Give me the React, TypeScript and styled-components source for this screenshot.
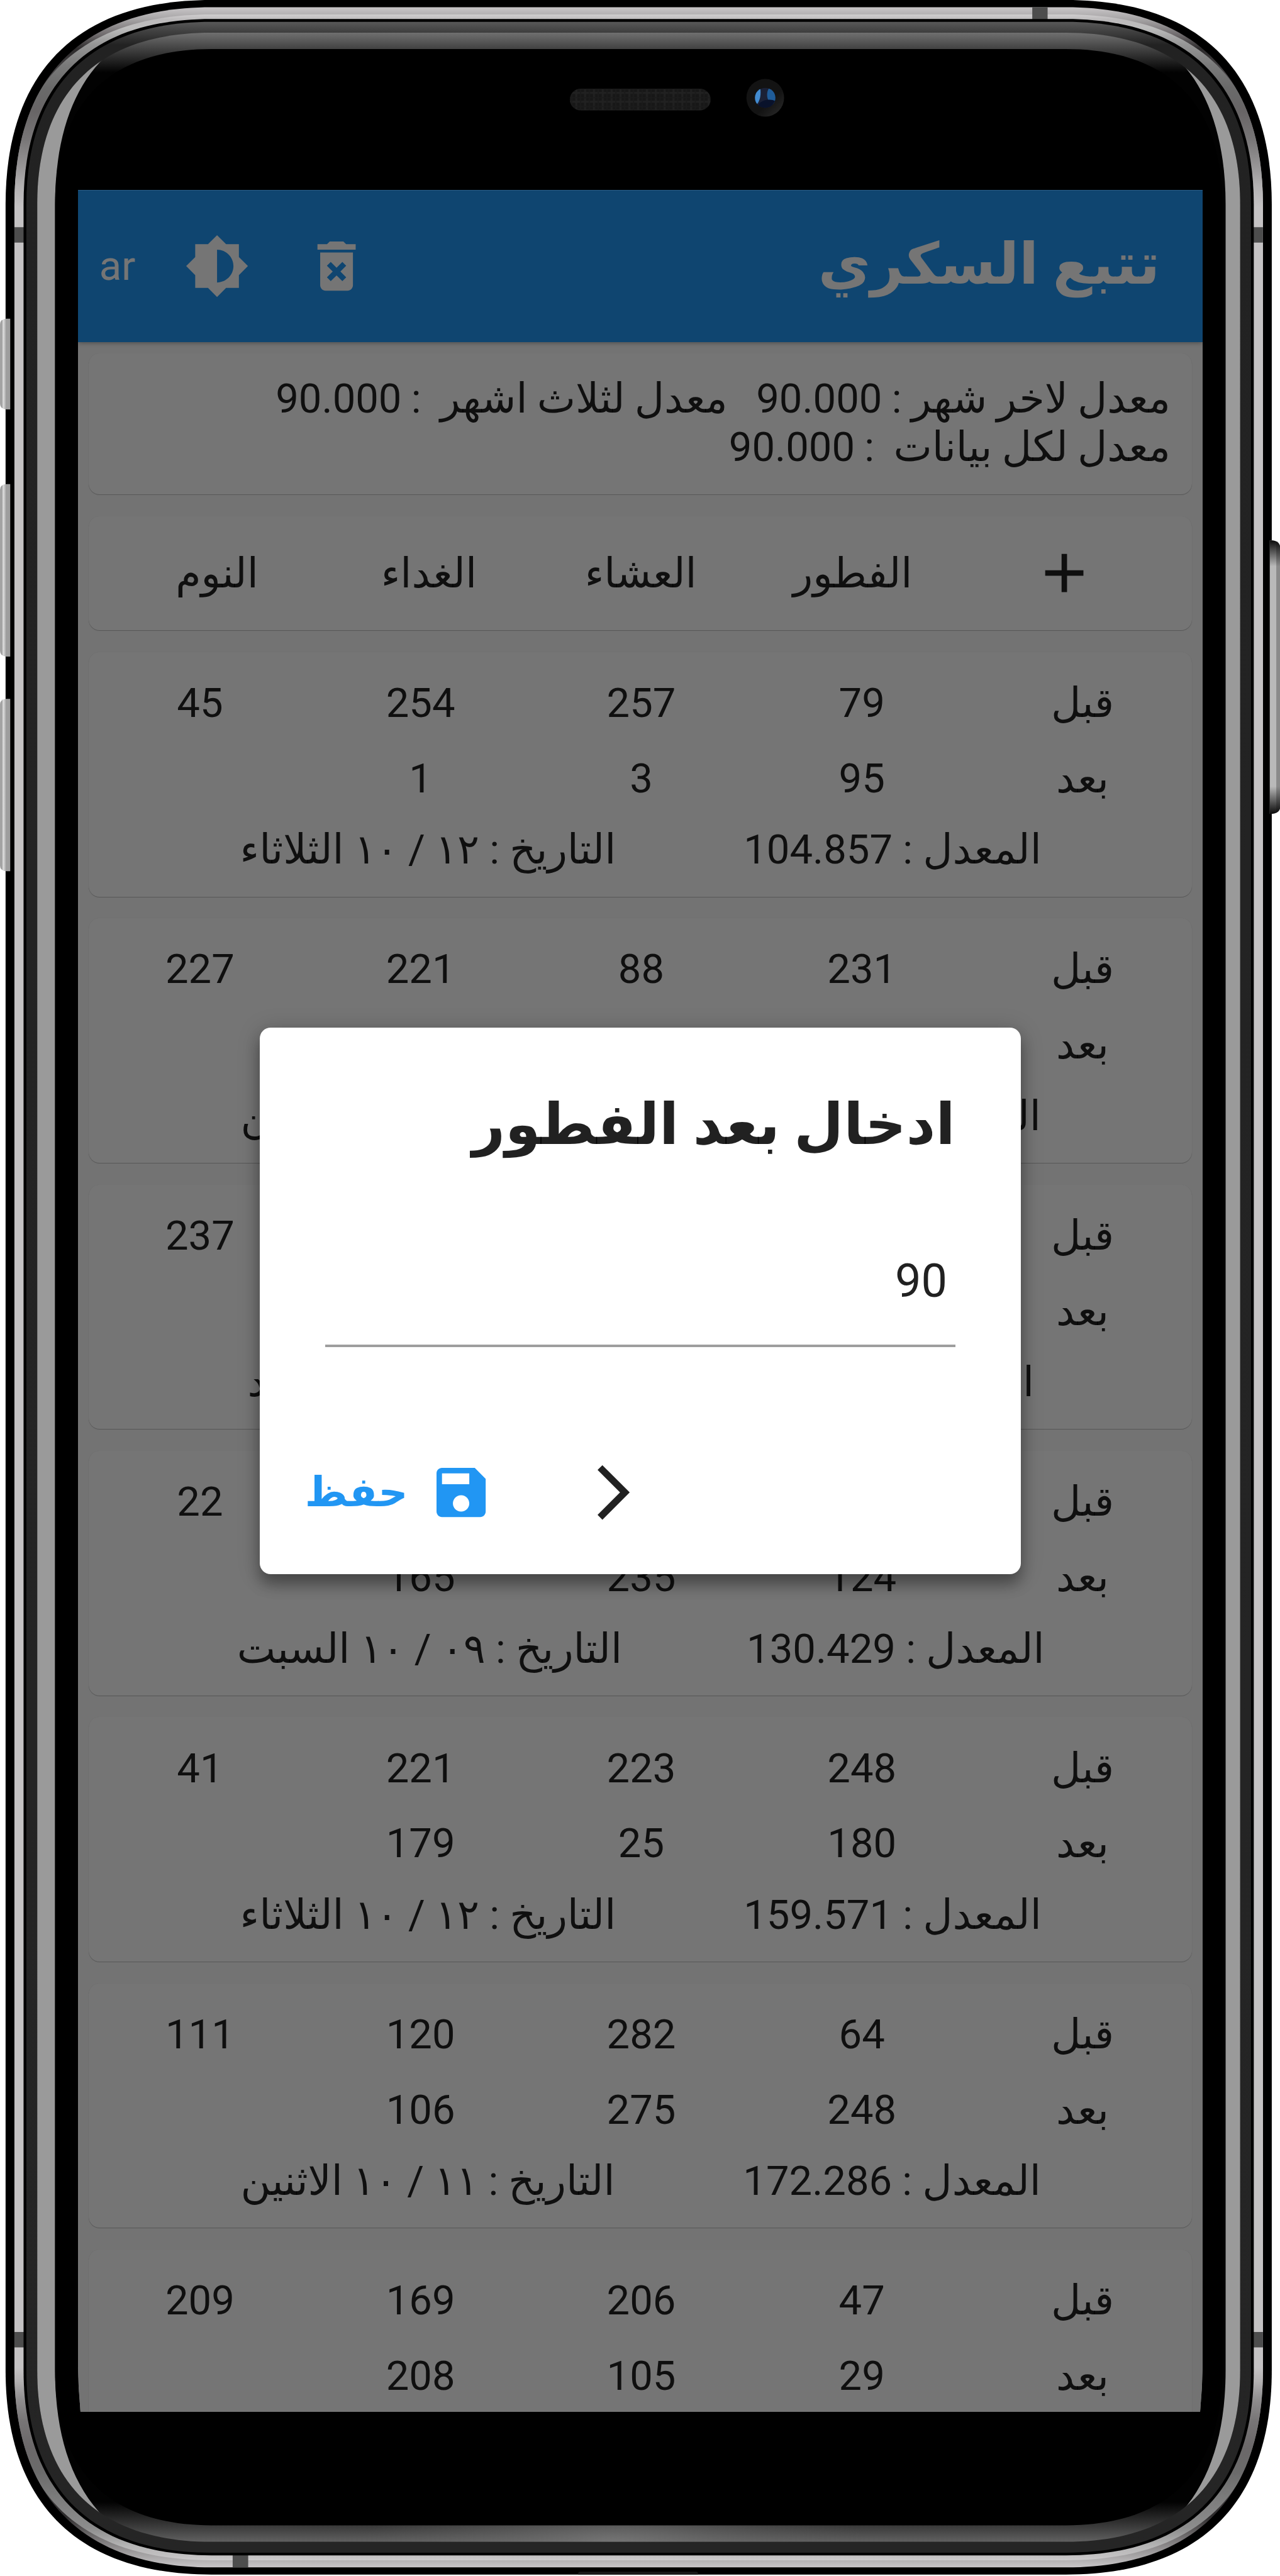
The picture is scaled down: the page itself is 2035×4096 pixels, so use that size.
import React from "react";
import styled, { createGlobalStyle } from "styled-components";

/* Design units are converted to page pixels with one shared factor. */
const K = 0.7389;
const u = (n: number) => `${+(n * K).toFixed(2)}px`;

const INK = "rgba(0, 0, 0, 0.87)";
const BLUE = "#2196f3";

const GlobalStyle = createGlobalStyle`
  html, body { margin: 0; padding: 0; background: #fff; }
  body { overflow: hidden; font-family: Roboto, "DejaVu Sans", sans-serif; }
  * { box-sizing: border-box; }
`;

const Stage = styled.main`
  position: relative;
  width: 2035px;
  height: 4096px;
  padding: ${u(409)} 0 0 ${u(167.6)};
  overflow: hidden;
`;

const FrameArt = styled.svg`
  position: absolute;
  inset: 0;
  width: 2035px;
  height: 4096px;
  display: block;
`;

const Screen = styled.div`
  position: relative;
  width: ${u(2420.2)};
  height: ${u(4781)};
  overflow: hidden;
  background: #fafafa;
  color: ${INK};
  font-size: ${u(88.2)};
  clip-path: polygon(0 0, 100% 0, 100% 97.8%, 99.93% 98.9%, 99.77% 100%, 0.23% 100%, 0.07% 98.9%, 0 97.8%);
`;

const AppBar = styled.header`
  position: relative;
  display: flex;
  align-items: center;
  justify-content: space-between;
  height: ${u(327.6)};
  padding: 0 ${u(92)} 0 ${u(46)};
  background: ${BLUE};
  color: #fff;
  box-shadow: 0 ${u(3)} ${u(10)} rgba(0, 0, 0, 0.35);
  z-index: 1;
`;

const Title = styled.h1`
  margin: 0 0 ${u(7)};
  font-size: ${u(123)};
  line-height: ${u(142)};
  font-weight: 700;
  white-space: nowrap;
`;

const DialogTitle = styled(Title)`
  margin: ${u(-3)} 0 ${u(3)};
`;

const Actions = styled.div`
  display: flex;
  flex-direction: row-reverse;
  align-items: center;
`;

const Lang = styled.span`
  width: ${u(183)};
  text-align: left;
  direction: ltr;
`;

const Icon = styled.svg<{ $gap?: number }>`
  display: block;
  width: ${u(141)};
  height: ${u(141)};
  fill: currentColor;
  flex: none;
  margin-right: ${(p) => u(p.$gap ?? 0)};
`;

const List = styled.div`
  display: flex;
  flex-direction: column;
  gap: ${u(47)};
  padding: ${u(23.5)} ${u(23.3)};
`;

const Card = styled.section<{ $h: number }>`
  flex: none;
  height: ${(p) => u(p.$h)};
  border-radius: ${u(23.5)};
  background: #fff;
  box-shadow: 0 1px 1px rgba(0, 0, 0, 0.24), 0 0 1px rgba(0, 0, 0, 0.08);
`;

const Summary = styled(Card)`
  padding: ${u(46.7)} ${u(46)} 0;
  line-height: ${u(104.5)};
  word-spacing: ${u(-1.3)};
  white-space: pre;
`;

const HeaderCard = styled(Card)`
  display: grid;
  grid-template-columns: repeat(5, 1fr);
  align-items: center;
  justify-items: center;
  padding: 0 ${u(46)} 0 ${u(48)};
`;

const EntryCard = styled(Card)`
  padding: ${u(30)} 0 0 ${u(2)};
`;

const ValueRow = styled.div`
  display: grid;
  grid-template-columns: repeat(5, 1fr);
  height: ${u(162)};
  margin-right: ${u(-2)};
  line-height: ${u(162)};
  text-align: center;
`;

const MetaRow = styled.div`
  display: flex;
  justify-content: space-evenly;
  height: ${u(144)};
  line-height: ${u(144)};
  padding: 0 ${u(49)};
  white-space: pre;
`;

const Overlay = styled.div`
  position: absolute;
  inset: 0;
  display: flex;
  align-items: center;
  justify-content: center;
  background: rgba(0, 0, 0, 0.54);
  z-index: 2;
`;

const Dialog = styled.div`
  display: flex;
  flex-direction: column;
  width: ${u(1637)};
  height: ${u(1175)};
  padding: ${u(141)} ${u(141)} 0;
  border-radius: ${u(23.5)};
  background: #fff;
  box-shadow: 0 ${u(22)} ${u(30)} rgba(0, 0, 0, 0.3), 0 ${u(6)} ${u(50)} rgba(0, 0, 0, 0.2);
`;

const Field = styled.div`
  height: ${u(404)};
  padding: ${u(191)} ${u(17)} 0;
  border-bottom: ${u(6)} solid #9e9e9e;
  font-size: ${u(100)};
  line-height: ${u(140)};
`;

const DialogActions = styled.div`
  display: flex;
  align-items: center;
  justify-content: flex-end;
  height: ${u(160)};
  margin: ${u(233)} 0 0 ${u(-44)};
`;

const SaveLabel = styled.span`
  font-weight: 700;
  color: ${BLUE};
`;

const SaveIcon = styled(Icon)`
  color: ${BLUE};
  margin: 0 ${u(186)} 0 ${u(44)};
`;

type Entry = { before: string[]; after: string[]; avg: string; date: string };

const entries: Entry[] = [
  { before: ["79", "257", "254", "45"], after: ["95", "3", "1"], avg: "104.857", date: "١٢ / ١٠ الثلاثاء" },
  { before: ["231", "88", "221", "227"], after: [], avg: "191.714", date: "١١ / ١٠ الاثنين" },
  { before: ["", "", "", "237"], after: [], avg: "155.714", date: "١٠ / ١٠ الاحد" },
  { before: ["", "", "", "22"], after: ["124", "235", "165"], avg: "130.429", date: "٠٩ / ١٠ السبت" },
  { before: ["248", "223", "221", "41"], after: ["180", "25", "179"], avg: "159.571", date: "١٢ / ١٠ الثلاثاء" },
  { before: ["64", "282", "120", "111"], after: ["248", "275", "106"], avg: "172.286", date: "١١ / ١٠ الاثنين" },
  { before: ["47", "206", "169", "209"], after: ["29", "105", "208"], avg: "", date: "" },
];

/* Rounded body outline: long, soft corners whose curve starts at (cx, cy). */
const body = (l: number, t: number, b: number, cx = 455, cy = 440, k = 0.65) => {
  const r = 2748.3 - l;
  const rx = 2748.3 - cx;
  const by = 5541 - cy;
  const kx = (cx - l) * (1 - k);
  const ky = (cy - t) * (1 - k);
  const kb = (b - by) * (1 - k);
  return `M${cx} ${t}H${rx}C${r - kx} ${t} ${r} ${t + ky} ${r} ${cy}V${by}C${r} ${b - kb} ${r - kx} ${b} ${rx} ${b}H${cx}C${l + kx} ${b} ${l} ${b - kb} ${l} ${by}V${cy}C${l} ${t + ky} ${l + kx} ${t} ${cx} ${t}Z`;
};

const stops = (list: [number, string][], from = 0, to = 5541) =>
  list.map(([y, c], i) => <stop key={i} offset={(y - from) / (to - from)} stopColor={c} />);

const METAL = body(31, 15.5, 5525.5);
const RIM = body(80, 70.4, 5470.4);
const CRESCENT =
  "M60 113H237C157 180 118.5 298 118.5 440V5100C118.5 5248 157 5356 236 5430H60Z";

const Phone = () => (
  <FrameArt viewBox="0 0 2754 5544" preserveAspectRatio="none">
    <defs>
      <linearGradient id="metal" gradientUnits="userSpaceOnUse" x1="0" y1="0" x2="0" y2="5541">
        {stops([
          [15, "#c9c6c8"], [42, "#a5a3a4"], [75, "#6f6b6d"], [105, "#2c2a2b"], [150, "#454244"], [200, "#5f5c5d"],
          [245, "#686566"], [300, "#787677"], [360, "#989697"], [400, "#b3b1b2"], [445, "#c4c2c3"],
          [5096, "#c4c2c3"], [5125, "#b3b1b2"], [5165, "#8f8d8e"], [5210, "#777576"], [5270, "#6b6869"],
          [5320, "#5a5758"], [5365, "#434042"], [5415, "#2c2a2b"], [5455, "#6b6869"], [5495, "#a09e9f"], [5526, "#c9c6c8"],
        ])}
      </linearGradient>
      <linearGradient id="sheen" gradientUnits="userSpaceOnUse" x1="0" y1="0" x2="0" y2="5541">
        {stops([
          [31, "#d0cecf"], [42, "#bcbabb"], [60, "#bdbdbd"], [95, "#969696"], [140, "#7a7a7a"], [190, "#6a6a6a"],
          [240, "#686566"], [300, "#787677"], [360, "#989697"], [400, "#b3b1b2"], [445, "#c4c2c3"],
          [5096, "#c4c2c3"], [5125, "#b3b1b2"], [5165, "#8f8d8e"], [5210, "#777576"], [5270, "#6b6869"],
          [5320, "#6b6b6b"], [5380, "#7d7d7d"], [5440, "#8c8c8c"], [5480, "#b5b5b5"], [5500, "#c2c0c1"], [5510, "#cdcbcc"],
        ])}
      </linearGradient>
      <linearGradient id="dark" gradientUnits="userSpaceOnUse" x1="0" y1="0" x2="0" y2="5541">
        {stops([[47, "#585858"], [70, "#3e3e3e"], [97, "#222"], [5494, "#252525"]])}
      </linearGradient>
      <linearGradient id="rim" gradientUnits="userSpaceOnUse" x1="0" y1="0" x2="0" y2="5541">
        {stops([
          [70, "#707070"], [105, "#424242"], [156, "#020202"], [200, "#020202"],
          [5385, "#020202"], [5435, "#383838"], [5470, "#606060"],
        ])}
      </linearGradient>
      <radialGradient id="glow" gradientUnits="userSpaceOnUse" cx="0" cy="0" r="1" gradientTransform="translate(1320 5472) scale(540 120)">
        <stop offset="0" stopColor="#7a7a7a" stopOpacity=".8" />
        <stop offset="1" stopColor="#606060" stopOpacity="0" />
      </radialGradient>
      <linearGradient id="leftKey" x1="0" x2="1" y1="0" y2="0">
        <stop offset="0" stopColor="#a3a3a3" />
        <stop offset=".26" stopColor="#a3a3a3" />
        <stop offset=".28" stopColor="#e2e2e2" />
        <stop offset=".54" stopColor="#b4b4b4" />
        <stop offset=".56" stopColor="#9e9e9e" />
        <stop offset="1" stopColor="#9e9e9e" />
      </linearGradient>
      <linearGradient id="keyFade" x1="0" x2="0" y1="0" y2="1">
        <stop offset="0" stopColor="#0a0a0a" />
        <stop offset=".095" stopColor="#0a0a0a" stopOpacity="0" />
        <stop offset=".9" stopColor="#0a0a0a" stopOpacity="0" />
        <stop offset="1" stopColor="#0a0a0a" />
      </linearGradient>
      <linearGradient id="camRing" x1="0" x2="1" y1="0" y2="1">
        <stop offset=".6" stopColor="#131313" />
        <stop offset="1" stopColor="#2c2c2c" />
      </linearGradient>
      <pattern id="mesh" width="19" height="19" patternUnits="userSpaceOnUse">
        <rect width="19" height="19" fill="#171717" />
        <path d="M5 0V19M0 10H19" stroke="#212121" strokeWidth="4" />
        <path d="M14 0V19M0 1H19" stroke="#1b1b1b" strokeWidth="3" />
      </pattern>
      <clipPath id="inMetal"><path d={METAL} /></clipPath>
      <clipPath id="inRim"><path d={RIM} /></clipPath>
      <clipPath id="inLens"><ellipse cx="1646.3" cy="210.5" rx="22" ry="21.5" /></clipPath>
    </defs>

    <path d={body(12, 0, 5541)} />
    <path d={METAL} fill="url(#metal)" />
    <g clipPath="url(#inMetal)">
      <path d={body(24, 31, 5510)} fill="url(#sheen)" />
      <g fill="#4d4d4d">
        <path d="M20 489H60V522H20ZM2690 489H2730V522H2690ZM20 5019H60V5052H20ZM2690 5019H2730V5052H2690Z" />
        <path d="M2221 10H2254V50H2221ZM500.6 5490H534V5530H500.6Z" />
      </g>
    </g>
    <path d={body(50.7, 40.8, 5499.6)} />
    <path d={body(56.7, 47, 5493.8)} fill="url(#dark)" />
    <path d={RIM} fill="url(#rim)" />
    <g clipPath="url(#inRim)">
      <rect x="780" y="5430" width="1080" height="41" fill="url(#glow)" />
      <path d={CRESCENT} fill="#9a9a9a" />
      <path d={CRESCENT} fill="#9a9a9a" transform="matrix(-1 0 0 1 2755.5 0)" />
    </g>
    <path d={body(118.5, 105.6, 5435)} />
    <path d="M1243.8 5541V5539Q1243.8 5535 1249 5535H1497Q1502 5535 1502 5539V5541Z" fill="#1a1a1a" />

    {[[686, 195], [1042, 371], [1504, 371]].map(([y, h]) => (
      <path
        key={y}
        d={`M22 ${y}H12Q0 ${y + 2} 0 ${y + 12}V${y + h - 12}Q0 ${y + h - 2} 12 ${y + h}H22Z`}
        fill="url(#leftKey)"
      />
    ))}
    <path d="M2732 1163H2738Q2752 1165 2754 1175V1740Q2752 1750 2738 1751.5H2732Z" fill="#b9b9b9" />
    <path d="M2746 1166Q2752 1169 2754 1175V1740Q2752 1746 2746 1749Z" fill="#8a8a8a" />
    <path d="M2732 1163H2738Q2752 1165 2754 1175V1740Q2752 1750 2738 1751.5H2732Z" fill="url(#keyFade)" />

    <rect x="1226" y="190.7" width="303" height="47" rx="23.5" fill="url(#mesh)" />
    <ellipse cx="1646.5" cy="210.5" rx="40.5" ry="40.5" fill="url(#camRing)" />
    <g clipPath="url(#inLens)">
      <rect x="1620" y="185" width="52" height="52" fill="#1b2136" />
      <ellipse cx="1622" cy="199" rx="14.5" ry="28" fill="#428bd0" />
      <ellipse cx="1668" cy="204" rx="17.5" ry="22" fill="#1f5c99" />
      <ellipse cx="1655" cy="232" rx="25" ry="17.5" fill="#09122b" />
    </g>
  </FrameArt>
);

const App = () => (
  <>
    <GlobalStyle />
    <Stage>
      <Phone />
      <Screen dir="rtl">
        <AppBar>
          <Title>تتبع السكري</Title>
          <Actions>
            <Lang>ar</Lang>
            <Icon viewBox="0 0 24 24" $gap={116}>
              <path d="M20 15.31L23.31 12 20 8.69V4h-4.69L12 .69 8.69 4H4v4.69L.69 12 4 15.31V20h4.69L12 23.31 15.31 20H20v-4.69zM12 18V6c3.31 0 6 2.69 6 6s-2.69 6-6 6z" />
            </Icon>
            <Icon viewBox="0 0 24 24">
              <path d="M6 19c0 1.1.9 2 2 2h8c1.1 0 2-.9 2-2V7H6v12zm2.46-7.12l1.41-1.41L12 12.59l2.12-2.12 1.41 1.41L13.41 14l2.12 2.12-1.41 1.41L12 15.41l-2.12 2.12-1.41-1.41L10.59 14l-2.13-2.12zM15.5 4l-1-1h-5l-1 1H5v2h14V4z" />
            </Icon>
          </Actions>
        </AppBar>

        <List>
          <Summary $h={304}>
            <div>{"معدل لاخر شهر : 90.000   معدل لثلاث اشهر  : 90.000"}</div>
            <div>{"معدل لكل بيانات  : 90.000"}</div>
          </Summary>

          <HeaderCard $h={245.3}>
            <Icon viewBox="0 0 24 24">
              <path d="M19 13h-6v6h-2v-6H5v-2h6V5h2v6h6v2z" />
            </Icon>
            {["الفطور", "العشاء", "الغداء", "النوم"].map((t) => (
              <span key={t}>{t}</span>
            ))}
          </HeaderCard>

          {entries.map((e, i) => (
            <EntryCard $h={526} key={i}>
              <ValueRow>
                <span>قبل</span>
                {e.before.map((v, j) => (
                  <span key={j}>{v}</span>
                ))}
              </ValueRow>
              <ValueRow>
                <span>بعد</span>
                {e.after.map((v, j) => (
                  <span key={j}>{v}</span>
                ))}
              </ValueRow>
              {e.avg && (
                <MetaRow>
                  <span>{`المعدل : ${e.avg}`}</span>
                  <span>{`التاريخ : ${e.date}`}</span>
                </MetaRow>
              )}
            </EntryCard>
          ))}
        </List>

        <Overlay>
          <Dialog>
            <DialogTitle as="h2">ادخال بعد الفطور</DialogTitle>
            <Field>90</Field>
            <DialogActions>
              <Icon viewBox="0 0 24 24">
                <path d="M6.23 20.23L8 22l10-10L8 2 6.23 3.77 14.46 12z" />
              </Icon>
              <SaveIcon viewBox="0 0 24 24">
                <path d="M17 3H5c-1.11 0-2 .9-2 2v14c0 1.1.89 2 2 2h14c1.1 0 2-.9 2-2V7l-4-4zm-5 16c-1.66 0-3-1.34-3-3s1.34-3 3-3 3 1.34 3 3-1.34 3-3 3zm3-10H5V5h10v4z" />
              </SaveIcon>
              <SaveLabel>حفظ</SaveLabel>
            </DialogActions>
          </Dialog>
        </Overlay>
      </Screen>
    </Stage>
  </>
);

export default App;
